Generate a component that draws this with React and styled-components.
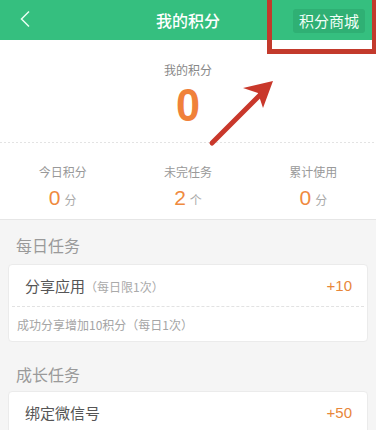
import React from 'react'
import styled, { createGlobalStyle } from 'styled-components';

const Global = createGlobalStyle`
  body {
    margin: 0;
    background: #f5f5f5;
    font-family: "Noto Sans CJK SC", "Noto Sans", sans-serif;
  }
`;

const stats = [
  { label: '今日积分', value: 0, unit: '分' },
  { label: '未完任务', value: 2, unit: '个' },
  { label: '累计使用', value: 0, unit: '分' },
];

export default function App() {
  return (
    <Page>
      <Global />
      <Header>
        <Back>
          <svg width="12" height="18" viewBox="0 0 12 18">
            <path d="M10 1.5 L2.5 9 L10 16.5" fill="none" stroke="#e8fff3" strokeWidth="1.5" />
          </svg>
        </Back>
        <Title>我的积分</Title>
        <ShopButton>积分商城</ShopButton>
        <Highlight />
      </Header>

      <Summary>
        <SummaryLabel>我的积分</SummaryLabel>
        <BigNumber>0</BigNumber>
        <Arrow width="80" height="80" viewBox="0 0 80 80">
          <line x1="9" y1="70" x2="62" y2="17" stroke="#c9382b" strokeWidth="5" strokeLinecap="round" />
          <path d="M70 8 L40 15 L55 20 L60 35 Z" fill="#c9382b" />
        </Arrow>
      </Summary>

      <Stats>
        {stats.map((s) => (
          <Stat key={s.label}>
            <StatLabel>{s.label}</StatLabel>
            <StatValue>
              {s.value}<small>{s.unit}</small>
            </StatValue>
          </Stat>
        ))}
      </Stats>

      <SectionTitle>每日任务</SectionTitle>
      <Card>
        <TaskRow>
          <TaskName>分享应用<em>（每日限1次）</em></TaskName>
          <Points>+10</Points>
        </TaskRow>
        <TaskDesc>成功分享增加10积分（每日1次）</TaskDesc>
      </Card>

      <SectionTitle $gap>成长任务</SectionTitle>
      <Card>
        <TaskRow>
          <TaskName>绑定微信号</TaskName>
          <Points>+50</Points>
        </TaskRow>
      </Card>
    </Page>
  )
}

const Page = styled.div`
  width: 376px;
  height: 430px;
  overflow: hidden;
  background: #f5f5f5;
`;

const Header = styled.header`
  position: relative;
  height: 40px;
  background: #35bf7f;
  display: flex;
  align-items: center;
  justify-content: center;
  z-index: 2;
`;

const Back = styled.div`
  position: absolute;
  left: 19px;
  top: 10px;
  display: flex;
`;

const Title = styled.h1`
  margin: 0;
  color: #fff;
  font-size: 16px;
  font-weight: 500;
`;

const ShopButton = styled.div`
  position: absolute;
  right: 11px;
  top: 9px;
  height: 24px;
  padding: 0 6px;
  border-radius: 3px;
  background: #2fb074;
  color: #f2fff8;
  font-size: 15px;
  line-height: 24px;
`;

const Highlight = styled.div`
  position: absolute;
  left: 267px;
  top: -6px;
  width: 109px;
  height: 60px;
  box-sizing: border-box;
  border: 5px solid #c33a2c;
  border-right-width: 4px;
`;

const Summary = styled.section`
  position: relative;
  box-sizing: border-box;
  background: #fff;
  padding-top: 21px;
  height: 103px;
  display: flex;
  flex-direction: column;
  align-items: center;
  background-image: linear-gradient(to right, #e3e3e3 50%, transparent 50%);
  background-size: 4px 1px;
  background-repeat: repeat-x;
  background-position: 0 102px;
`;

const SummaryLabel = styled.div`
  font-size: 12px;
  color: #888;
  line-height: 18px;
`;

const BigNumber = styled.div`
  margin-top: 2px;
  font-family: "Liberation Sans", Arial, sans-serif;
  font-size: 47px;
  font-weight: 700;
  color: #f0813a;
  line-height: 48px;
  transform: scaleX(0.92);
`;

const Arrow = styled.svg`
  position: absolute;
  left: 203px;
  top: 33px;
`;

const Stats = styled.section`
  background: #fff;
  display: grid;
  grid-template-columns: repeat(3, 1fr);
  padding: 20px 0 6px;
  border-bottom: 1px solid #e6e6e6;
`;

const Stat = styled.div`
  display: flex;
  flex-direction: column;
  align-items: center;
`;

const StatLabel = styled.div`
  font-size: 12px;
  color: #999;
  line-height: 18px;
`;

const StatValue = styled.div`
  margin-top: 4px;
  font-family: "Liberation Sans", Arial, sans-serif;
  font-size: 21px;
  color: #ef8a3e;
  line-height: 26px;
  small {
    font-family: "Noto Sans CJK SC", sans-serif;
    font-size: 12px;
    color: #aaa;
    margin-left: 4px;
  }
`;

const SectionTitle = styled.h2`
  margin: 0;
  padding: ${(p) => (p.$gap ? '20px 16px 5px' : '13px 16px 7px')};
  font-size: 16px;
  font-weight: 400;
  color: #9a9a9a;
  line-height: 24px;
`;

const Card = styled.div`
  margin: 0 8px;
  background: #fff;
  border: 1px solid #ebebeb;
  border-radius: 4px;
  padding: 0 3px;
`;

const TaskRow = styled.div`
  height: 41px;
  display: flex;
  align-items: center;
  justify-content: space-between;
  padding: 0 12px 0 13px;
  border-bottom: 1px dashed #e2e2e2;
`;

const TaskName = styled.div`
  font-size: 15px;
  color: #555;
  em {
    font-style: normal;
    font-size: 12px;
    color: #aaa;
  }
`;

const Points = styled.div`
  font-family: "Liberation Sans", Arial, sans-serif;
  font-size: 15px;
  color: #e8873a;
`;

const TaskDesc = styled.div`
  height: 34px;
  display: flex;
  align-items: center;
  padding-left: 5px;
  font-size: 12px;
  color: #a5a5a5;
`;
